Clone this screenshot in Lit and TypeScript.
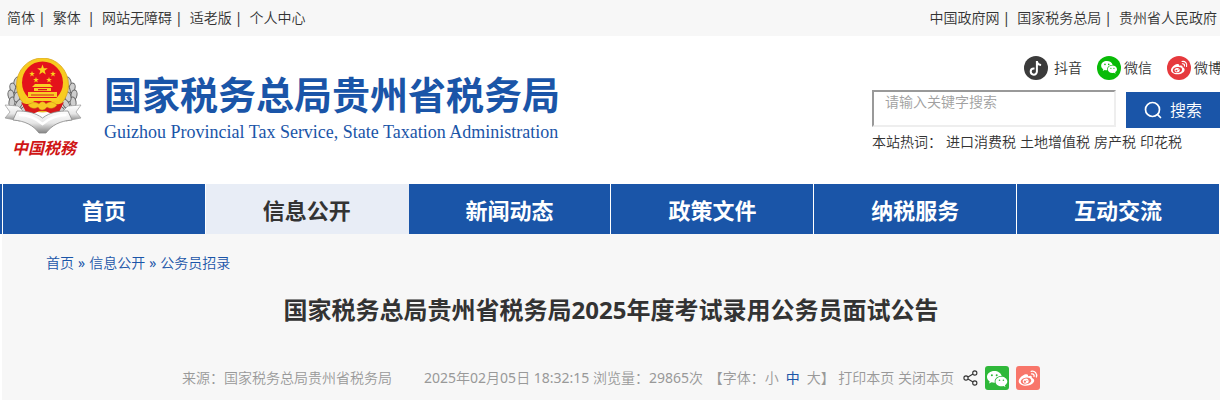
import { LitElement, html, css, svg } from "lit";
import { customElement, state } from "lit/decorators.js";
import { classMap } from "lit/directives/class-map.js";

const wechatShape = svg`
  <path fill="#fff" d="M9.3 5C5.3 5 2 7.6 2 10.9c0 1.8 1 3.4 2.700 4.500l-.7 2.200 2.600-1.300c.9.300 1.700.4 2.700.4h.6c-.1-.4-.2-.9-.2-1.300 0-3.100 2.900-5.500 6.500-5.500h.5C16 7.100 13 5 9.300 5z"/>
  <path fill="#fff" d="M22.300 15.500c0-2.700-2.700-4.800-5.900-4.800s-5.900 2.100-5.900 4.800 2.700 4.800 5.900 4.800c.7 0 1.400-.1 2-.3l2.100 1.100-.6-1.800c1.500-.9 2.400-2.300 2.400-3.800z"/>`;
const wechatEyes = (fill: string) => svg`
  <g fill=${fill}><circle cx="6.900" cy="9.200" r="1"/><circle cx="11.700" cy="9.200" r="1"/>
  <circle cx="14.500" cy="14.200" r=".8"/><circle cx="18.400" cy="14.200" r=".8"/></g>`;
const weiboShape = (fill: string) => svg`
  <path fill="#fff" d="M9.700 8.200C6.700 8.700 2.700 12.300 2.700 15.300c0 2.700 3.300 4.500 7.100 4.500 5 0 8.400-2.700 8.400-5.200 0-1.500-1.200-2.200-2.400-2.600.5-1.800-.4-3-3.900-1.700.4-1.400 0-2.400-2.200-2.100z"/>
  <ellipse cx="10" cy="15" rx="5.300" ry="3.400" fill=${fill} transform="rotate(-8 10 15)"/>
  <ellipse cx="9.700" cy="15.200" rx="3" ry="2.500" fill="#fff" transform="rotate(-15 9.700 15.200)"/>
  <circle cx="8.900" cy="15.700" r="1.100" fill=${fill}/><circle cx="10.900" cy="14.500" r=".5" fill=${fill}/>
  <path fill="none" stroke="#fff" stroke-width="1.300" stroke-linecap="round" d="M15.200 5.300c3.600-.7 6.300 2.200 5.200 5.700M15.600 7.900c1.700-.3 2.900.9 2.400 2.600"/>`;

const weiboRound = svg`<circle cx="12" cy="12" r="12" fill="#e6393d"/>
  <g transform="translate(1.600 .8) scale(.88)">${weiboShape("#e6393d")}</g>`;
const wechatRound = svg`<circle cx="12" cy="12" r="12" fill="#09bb07"/>
  <g transform="translate(2.600 1.200) scale(.78)">${wechatShape}${wechatEyes("#09bb07")}</g>`;
const douyinRound = svg`<circle cx="12" cy="12" r="12" fill="#3b3b3b"/>
  <path fill="none" stroke="#fff" stroke-width="2" d="M12.900 5v10.600a3.100 3.100 0 1 1-3.100-3.100h.7M12.900 5.200c.2 2.300 1.800 3.700 4.200 3.900"/>`;

const star = (x: number, y: number, s: number) => svg`
  <path fill="#fbd21c" transform="translate(${x} ${y}) scale(${s})"
    d="M0-10 2.400-3.100 9.500-3.100 3.800 1.200 5.900 8.100 0 4-5.900 8.100-3.800 1.200-9.500-3.100-2.400-3.100z"/>`;

const leaves = [
  [13, 24, 105], [9, 30, 75], [7, 37, 80], [8, 44, 100], [12, 51, 125], [18, 57, 145],
  [14, 32, 110], [13, 39, 100], [15, 46, 120], [20, 52, 135], [25, 57, 150],
];

@customElement("tax-emblem")
class TaxEmblem extends LitElement {
  static styles = css`
    :host { display: block; }
    .mark { display: block; width: 78px; height: 78px; }
  `;
  render() {
    const wreath = leaves.map(([x, y, r]) => svg`
      <ellipse cx=${x} cy=${y} rx="5" ry="3" fill="#cfcfcf" stroke="#666" stroke-width="1"
        transform="rotate(${r} ${x} ${y})"/>`);
    return html`
      <svg class="mark" viewBox="0 0 78 78" aria-hidden="true">
        <defs>
          <linearGradient id="silver" x1="0" y1="0" x2="0" y2="1">
            <stop offset="0" stop-color="#fff"/><stop offset=".55" stop-color="#e6e6e6"/>
            <stop offset="1" stop-color="#858585"/>
          </linearGradient>
        </defs>
        ${wreath}
        <g transform="translate(77 0) scale(-1 1)">${wreath}</g>
        <path fill="url(#silver)" stroke="#999" stroke-width=".7"
          d="M1 47l13 1 8 8-6 7-15-3 5-6zM77 47l-13 1-8 8 6 7 15-3-5-6z"/>
        <ellipse cx="38.500" cy="27" rx="26" ry="27" fill="#f7cb1f" stroke="#dba617" stroke-width=".8"/>
        <ellipse cx="38.500" cy="24.500" rx="20.500" ry="21" fill="#e4131b"/>
        ${star(38.5, 12, 0.56)}${star(28, 16, 0.3)}${star(32, 22, 0.3)}${star(45, 22, 0.3)}${star(49, 16, 0.3)}
        <path fill="#f9ce25" d="M28 29l3-3h15l3 3zM30 30h17v3H30zM24 34h29v5H24zM22 40h33v3H22z"/>
        <path fill="#d9201c" d="M34 31h9v1.200h-9zM27 36.500h23v1H27z"/>
        <path fill="#d7181b" d="M17 44c6 4 12 1 16 0h11c4 2 10 4 16 0l-5 10c-6 3-10 1-13-1h-7c-4 3-9 3-13 1z"/>
        <path fill="#f7c822" stroke="#c98f16" stroke-width=".5"
          d="M24 47c4-3 8-3 11-1 2-3 5-3 7 0 3-3 8-2 11 1-3 4-7 4-10 2-3 4-7 4-9 0-3 2-7 2-10-2z"/>
        <path fill="url(#silver)" stroke="#888" stroke-width=".8"
          d="M13 53c9 0 17 1 25.500 7 8-6 16-7 25.500-7l4 9c-12 1-20 5-26 13h-7c-6-8-14-12-26-13z"/>
        <path fill="none" stroke="#fff" stroke-width="2.500" d="M15 57c10 0 16 3 23.500 9 7-6 14-9 24-9"/>
      </svg>`;
  }
}

@customElement("app-root")
class AppRoot extends LitElement {
  @state() private size = "中";

  static styles = css`
    :host {
      display: block; overflow: hidden; background: #fff; color: #333;
      font: 350 14px/20px "Noto Sans", "Noto Sans CJK SC", sans-serif;
    }
    * { box-sizing: border-box; }
    a { color: inherit; text-decoration: none; white-space: pre; }
    .topbar {
      display: flex; justify-content: space-between; align-items: center;
      height: 36px; padding: 0 3px 0 7px; background: #f7f7f7;
    }
    .links { display: flex; }
    .links a + a::before { content: "|"; padding: 0 7px 0 3px; font-weight: 400; }
    .header { display: flex; justify-content: space-between; height: 148px; }
    .brand { display: flex; gap: 20px; padding: 22px 0 0 4px; }
    .seal { width: 80px; }
    .script {
      color: #cf1515; font: italic 700 16px/22px "Noto Sans CJK SC", sans-serif;
      text-align: center; white-space: nowrap;
    }
    .names { padding-top: 12px; color: #1a55a8; white-space: nowrap; }
    .name { margin: 0; font: 700 38px/46px "Noto Sans CJK SC", sans-serif; }
    .english { margin: 0; padding-top: 4px; font: 18px/24px "Liberation Serif", serif; }
    .tools { flex: none; width: 348px; padding-top: 20px; }
    .social { display: flex; padding-left: 152px; margin-bottom: 10px; }
    .social a { flex: none; display: flex; align-items: center; height: 24px; gap: 3px; margin-right: 15px; }
    .social .first { gap: 6px; }
    .social svg { width: 24px; height: 24px; }
    .search { display: flex; gap: 10px; height: 38px; }
    .box {
      width: 244px; height: 37px; padding: 0 10px 15px 11px; background: #fff;
      border: 2px solid; border-color: #999 #eee #eee #999; border-radius: 0;
      font: inherit; color: #333; outline: none;
    }
    .box::placeholder { color: #a0a0a0; opacity: 1; }
    .go {
      flex: 1; display: flex; align-items: center; justify-content: center; gap: 8px;
      margin-top: 2px; padding: 0; border: 0; background: #1a55a8; color: #fff;
      font: inherit; font-size: 16px;
    }
    .go svg { width: 18px; height: 18px; }
    .hot { display: flex; gap: 4px; padding-top: 4px; white-space: nowrap; }
    .nav {
      display: grid; grid-template-columns: repeat(6, 1fr);
      margin-right: 1px; padding-left: 2px; background: #1a55a8;
    }
    .nav a {
      border-left: 1px solid #fff; text-align: center; color: #fff;
      font-size: 22px; line-height: 50px; font-weight: 700; padding-top: 1px; height: 50px;
    }
    .nav .current { background: #e8edf6; color: #333; }
    .nav .current + a { border-left-color: #e8edf6; }
    .page { margin-left: 2px; padding: 19px 0 10px; background: #f7f7f7; }
    .crumbs { display: flex; gap: 4px; padding-left: 44px; color: #1a55a8; }
    .crumbs span, .num { font-weight: 400; }
    .title { margin: 19px 0 37px; text-align: center; font-size: 24px; line-height: 36px; font-weight: 700; }
    .meta { display: flex; justify-content: center; align-items: center; color: #999; white-space: pre; height: 26px; }
    .date { margin: 0 2px 0 32px; }
    .size {
      padding: 0; margin: 0 7px 0 0; border: 0; background: none; color: inherit; font: inherit;
    }
    .size:last-of-type { margin-right: 0; }
    .size.on { color: #1a55a8; font-weight: 400; }
    .share { display: flex; align-items: center; margin-left: 9px; gap: 7px; }
    .share a { display: flex; }
    .node { width: 15px; height: 16px; }
    .tile { width: 24px; height: 24px; border-radius: 3px; }
    .green { background: #2fb83a; }
    .coral { background: #f8766a; }
  `;

  render() {
    const tabs = ["首页", "信息公开", "新闻动态", "政策文件", "纳税服务", "互动交流"];
    const num = (t: string) => html`<span class="num">${t}</span>`;
    return html`
      <div class="topbar">
        <div class="links">
          ${["简体", "繁体 ", "网站无障碍", "适老版", "个人中心"].map((t) => html`<a href="#">${t}</a>`)}
        </div>
        <div class="links">
          ${["中国政府网", "国家税务总局", "贵州省人民政府"].map((t) => html`<a href="#">${t}</a>`)}
        </div>
      </div>
      <header class="header">
        <div class="brand">
          <div class="seal"><tax-emblem></tax-emblem><div class="script">中国税務</div></div>
          <div class="names">
            <p class="name">国家税务总局贵州省税务局</p>
            <p class="english">Guizhou Provincial Tax Service, State Taxation Administration</p>
          </div>
        </div>
        <div class="tools">
          <div class="social">
            <a class="first" href="#"><svg viewBox="0 0 24 24">${douyinRound}</svg>抖音</a>
            <a href="#"><svg viewBox="0 0 24 24">${wechatRound}</svg>微信</a>
            <a href="#"><svg viewBox="0 0 24 24">${weiboRound}</svg>微博</a>
          </div>
          <form class="search" @submit=${(e: Event) => e.preventDefault()}>
            <input class="box" type="text" aria-label="请输入关键字搜索" placeholder="请输入关键字搜索">
            <button class="go" type="submit">
              <svg viewBox="0 0 18 18" fill="none" stroke="#fff" stroke-width="1.700" stroke-linecap="round">
                <circle cx="8.500" cy="8.500" r="7"/><path d="M13.600 13.600l2.900 2.900"/>
              </svg>搜索
            </button>
          </form>
          <div class="hot"><span>本站热词：</span>${["进口消费税", "土地增值税", "房产税", "印花税"].map(
            (t) => html`<a href="#">${t}</a>`)}</div>
        </div>
      </header>
      <nav class="nav">
        ${tabs.map((t, i) => html`<a href="#" class=${classMap({ current: i === 1 })}>${t}</a>`)}
      </nav>
      <main class="page">
        <div class="crumbs"><a href="#">首页</a><span>»</span><a href="#">信息公开</a><span>»</span><a href="#">公务员招录</a></div>
        <h1 class="title">国家税务总局贵州省税务局2025年度考试录用公务员面试公告</h1>
        <div class="meta"><span>来源：国家税务总局贵州省税务局</span><span class="date">${num("2025")}年${num("02")}月${num("05")}日${num(" 18:32:15 ")}浏览量：${num("29865")}次 </span><span>【字体：${["小", "中", "大"].map(
          (s) => html`<button type="button" class=${classMap({ size: true, on: s === this.size })}
            @click=${() => (this.size = s)}>${s}</button>`)}】 <a href="#">打印本页</a> <a href="#">关闭本页</a></span><span class="share"><svg class="node" viewBox="0 0 15 16" fill="none" stroke="#333" stroke-width="1.100">
              <circle cx="3" cy="8" r="2.100"/><circle cx="11.800" cy="3" r="2.100"/><circle cx="11.800" cy="13" r="2.100"/>
              <path d="M5 7l5-3M5 9l5 3"/></svg><a href="#" aria-label="微信"><svg class="tile green" viewBox="0 0 24 24">${wechatShape}${wechatEyes("#2fb83a")}</svg></a><a href="#" aria-label="微博"><svg class="tile coral" viewBox="0 0 24 24">${weiboShape("#f8766a")}</svg></a></span></div>
      </main>`;
  }
}
